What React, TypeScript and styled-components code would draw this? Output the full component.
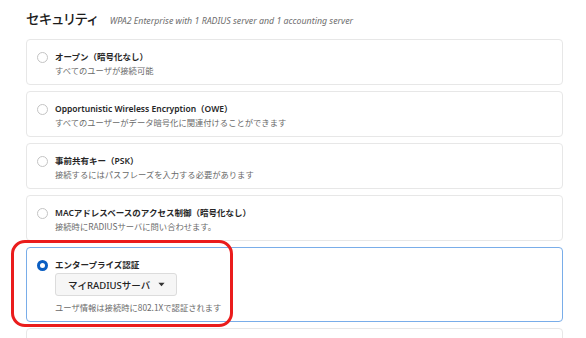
import React from 'react';
import styled, { createGlobalStyle } from 'styled-components';

const GlobalStyle = createGlobalStyle`
  html, body {
    margin: 0;
    padding: 0;
    background: #ffffff;
  }
  body {
    font-family: 'Noto Sans', 'Noto Sans CJK JP', sans-serif;
    color: #222222;
  }
`;

interface OptionItem {
  title: string;
  description: string;
}

const options: OptionItem[] = [
  { title: 'オープン（暗号化なし）', description: 'すべてのユーザが接続可能' },
  {
    title: 'Opportunistic Wireless Encryption（OWE）',
    description: 'すべてのユーザーがデータ暗号化に関連付けることができます',
  },
  { title: '事前共有キー（PSK）', description: '接続するにはパスフレーズを入力する必要があります' },
  {
    title: 'MACアドレスベースのアクセス制御（暗号化なし）',
    description: '接続時にRADIUSサーバに問い合わせます。',
  },
];

export default function App() {
  return (
    <>
      <GlobalStyle />
      <Page>
        <Header>
          <Heading>セキュリティ</Heading>
          <Subtitle>WPA2 Enterprise with 1 RADIUS server and 1 accounting server</Subtitle>
        </Header>
        <List>
          {options.map((o) => (
            <Card key={o.title}>
              <Radio />
              <Body>
                <Title>{o.title}</Title>
                <Description>{o.description}</Description>
              </Body>
            </Card>
          ))}
          <Card $selected>
            <Radio $checked />
            <Body>
              <Title>エンタープライズ認証</Title>
              <Dropdown>
                マイRADIUSサーバ
                <Caret viewBox="0 0 8 5">
                  <path d="M0.5 0.5 H7.5 L4 4.5 Z" fill="#333" />
                </Caret>
              </Dropdown>
              <Description $spaced>ユーザ情報は接続時に802.1Xで認証されます</Description>
            </Body>
            <Highlight />
          </Card>
          <Card $tail />
        </List>
      </Page>
    </>
  );
}

const Page = styled.div`
  width: 586px;
  height: 338px;
  overflow: hidden;
  padding: 0 23px 0 26px;
  box-sizing: border-box;
`;

const Header = styled.div`
  display: flex;
  align-items: baseline;
  gap: 12px;
  height: 39px;
  padding-top: 9px;
  box-sizing: border-box;
`;

const Heading = styled.h1`
  margin: 0;
  font-family: 'Noto Sans CJK JP', sans-serif;
  font-size: 13.5px;
  font-weight: 500;
  letter-spacing: 0.3px;
  line-height: 18px;
  color: #1c1c1c;
  font-feature-settings: 'palt' on;
`;

const Subtitle = styled.span`
  font-family: 'Noto Sans', 'Noto Sans CJK JP', sans-serif;
  font-style: italic;
  font-size: 8.8px;
  color: #6e6e6e;
`;

const List = styled.div`
  display: flex;
  flex-direction: column;
  gap: 6px;
`;

const Card = styled.div<{ $selected?: boolean; $tail?: boolean }>`
  position: relative;
  display: flex;
  align-items: flex-start;
  gap: 7px;
  min-height: ${(p) => (p.$tail ? '40px' : 'auto')};
  padding: 10px 10px 8px 10px;
  border: 1px solid ${(p) => (p.$selected ? '#79ade9' : '#e7e7e7')};
  border-radius: 4px;
  background: #ffffff;
`;

const Radio = styled.span<{ $checked?: boolean }>`
  flex: none;
  width: 11px;
  height: 11px;
  margin-top: 1.5px;
  box-sizing: border-box;
  border-radius: 50%;
  border: ${(p) => (p.$checked ? '3px solid #0a5ec2' : '1px solid #c4c4c4')};
  background: #ffffff;
`;

const Body = styled.div`
  display: flex;
  flex-direction: column;
  min-width: 0;
`;

const Title = styled.div`
  font-family: 'Noto Sans', 'Noto Sans CJK JP', sans-serif;
  font-size: 8.5px;
  font-weight: 600;
  line-height: 14px;
  color: #262626;
`;

const Description = styled.div<{ $spaced?: boolean }>`
  font-family: 'Noto Sans CJK JP', sans-serif;
  font-size: 8.3px;
  line-height: 12px;
  color: #6a6a6a;
  margin-top: ${(p) => (p.$spaced ? '5px' : '0')};
`;

const Dropdown = styled.div`
  display: inline-flex;
  align-self: flex-start;
  align-items: center;
  gap: 8px;
  height: 23px;
  margin-top: 1px;
  padding: 0 11px 0 12px;
  box-sizing: border-box;
  border: 1px solid #dcdcdc;
  border-radius: 3px;
  background: #f6f6f6;
  font-family: 'Noto Sans', 'Noto Sans CJK JP', sans-serif;
  font-size: 9.5px;
  font-weight: 500;
  color: #222222;
`;

const Caret = styled.svg`
  width: 7px;
  height: 5px;
`;

const Highlight = styled.div`
  position: absolute;
  left: -16px;
  top: -8px;
  width: 222px;
  height: 87px;
  box-sizing: border-box;
  border: 3px solid #ea1c1c;
  border-radius: 14px;
  pointer-events: none;
`;
